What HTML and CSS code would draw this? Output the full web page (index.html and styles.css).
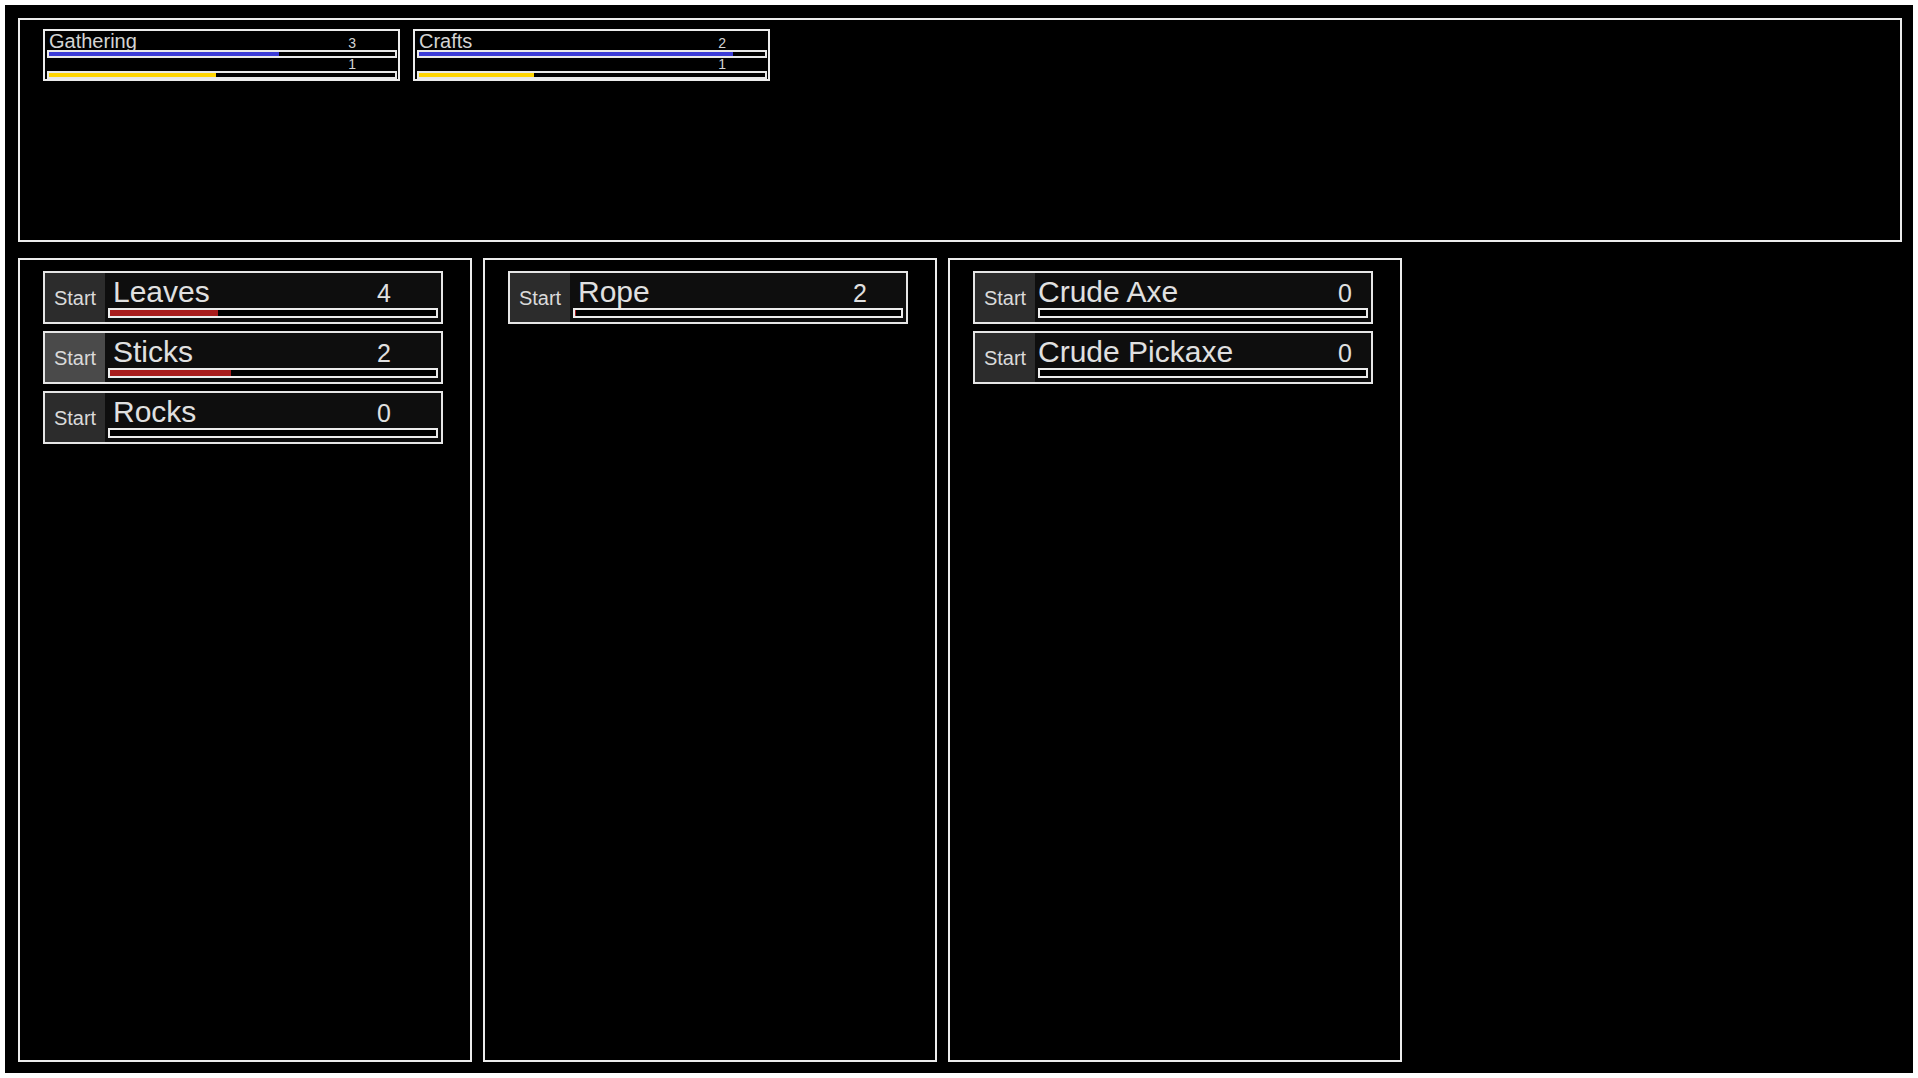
FILE: index.html
```html
<!DOCTYPE html>
<html lang="en">
<head>
<meta charset="utf-8">
<title>Idle Crafting</title>
<link rel="stylesheet" href="styles.css">
</head>
<body>
<div class="app">
  <section class="skills">
    <div class="skill">
      <div class="skill-row"><span class="skill-name">Gathering</span><span class="skill-num">3</span></div>
      <div class="meter"><div class="meter-fill meter-fill--xp" style="width:66.5%"></div></div>
      <div class="skill-row skill-row--sub"><span class="skill-num">1</span></div>
      <div class="meter"><div class="meter-fill meter-fill--lvl" style="width:48.3%"></div></div>
    </div>
    <div class="skill">
      <div class="skill-row"><span class="skill-name">Crafts</span><span class="skill-num">2</span></div>
      <div class="meter"><div class="meter-fill meter-fill--xp" style="width:90.8%"></div></div>
      <div class="skill-row skill-row--sub"><span class="skill-num">1</span></div>
      <div class="meter"><div class="meter-fill meter-fill--lvl" style="width:33.2%"></div></div>
    </div>
  </section>

  <main class="columns">
    <section class="column column--gather">
      <div class="task">
        <button class="start">Start</button>
        <div class="task-body">
          <div class="task-head"><span class="task-name">Leaves</span><span class="task-count">4</span></div>
          <div class="bar"><div class="bar-fill" style="width:33%"></div></div>
        </div>
      </div>
      <div class="task">
        <button class="start start--hover">Start</button>
        <div class="task-body">
          <div class="task-head"><span class="task-name">Sticks</span><span class="task-count">2</span></div>
          <div class="bar"><div class="bar-fill" style="width:37%"></div></div>
        </div>
      </div>
      <div class="task">
        <button class="start">Start</button>
        <div class="task-body">
          <div class="task-head"><span class="task-name">Rocks</span><span class="task-count">0</span></div>
          <div class="bar"><div class="bar-fill" style="width:0%"></div></div>
        </div>
      </div>
    </section>

    <section class="column column--refine">
      <div class="task">
        <button class="start">Start</button>
        <div class="task-body">
          <div class="task-head"><span class="task-name">Rope</span><span class="task-count">2</span></div>
          <div class="bar"><div class="bar-fill" style="width:0.4%"></div></div>
        </div>
      </div>
    </section>

    <section class="column column--tools">
      <div class="task">
        <button class="start">Start</button>
        <div class="task-body">
          <div class="task-head"><span class="task-name">Crude Axe</span><span class="task-count">0</span></div>
          <div class="bar"><div class="bar-fill" style="width:0%"></div></div>
        </div>
      </div>
      <div class="task">
        <button class="start">Start</button>
        <div class="task-body">
          <div class="task-head"><span class="task-name">Crude Pickaxe</span><span class="task-count">0</span></div>
          <div class="bar"><div class="bar-fill" style="width:0%"></div></div>
        </div>
      </div>
    </section>
  </main>
</div>
</body>
</html>
```

FILE: styles.css
```css
html {
  background: #ffffff;
}

body {
  margin: 5px;
  height: 1068px;
  background: #000000;
  color: #dadada;
  font-family: "Liberation Sans", Arial, sans-serif;
}

.app {
  box-sizing: border-box;
  height: 100%;
  padding: 13px 11px 11px 13px;
  display: flex;
  flex-direction: column;
  gap: 16px;
}

/* ---------- top skill panel ---------- */
.skills {
  box-sizing: border-box;
  height: 224px;
  border: 2px solid #ececec;
  padding: 9px 23px;
  display: flex;
  align-items: flex-start;
  gap: 13px;
}

.skill {
  box-sizing: border-box;
  width: 357px;
  height: 52px;
  border: 2px solid #ececec;
  display: flex;
  flex-direction: column;
}

.skill-row {
  height: 19px;
  display: flex;
  align-items: baseline;
  justify-content: space-between;
  padding: 0 42px 0 4px;
  line-height: 20px;
}

.skill-row--sub {
  height: 13px;
  line-height: 13px;
  justify-content: flex-end;
  align-items: flex-end;
}

.skill-name {
  font-size: 20px;
  color: #d4d4d4;
}

.skill-num {
  font-size: 14px;
  color: #d4d4d4;
}

.meter {
  box-sizing: border-box;
  height: 8px;
  margin: 0 1px 0 2px;
  border: 2px solid #e8e8e8;
  background: #000;
}

.meter-fill {
  height: 100%;
}

.meter-fill--xp {
  background: #3b3bd6;
}

.meter-fill--lvl {
  background: #ffd500;
}

/* ---------- columns ---------- */
.columns {
  flex: 1;
  display: flex;
  gap: 11px;
}

.column {
  box-sizing: border-box;
  width: 454px;
  border: 2px solid #ececec;
  padding: 11px 23px;
  display: flex;
  flex-direction: column;
  gap: 7px;
}

.column--gather {
  --name-pad: 5px;
  --count-pad: 47px;
}

.column--refine {
  --name-pad: 5px;
  --count-pad: 36px;
}

.column--tools {
  --name-pad: 0px;
  --count-pad: 16px;
}

.task {
  box-sizing: border-box;
  width: 400px;
  height: 53px;
  border: 2px solid #e6e6e6;
  background: #0e0e0e;
  display: flex;
}

.start {
  width: 60px;
  margin: 0;
  padding: 0;
  border: 0;
  background: #2c2c2c;
  color: #dadada;
  font-family: "Liberation Sans", Arial, sans-serif;
  font-size: 20px;
  line-height: 20px;
  cursor: pointer;
}

.start--hover {
  background: #4a4a4a;
}

.task-body {
  flex: 1;
  display: flex;
  flex-direction: column;
  padding: 0 3px;
}

.task-head {
  box-sizing: border-box;
  height: 35px;
  padding: 2px 0 0 var(--name-pad);
  display: flex;
  align-items: baseline;
  line-height: 33px;
}

.task-name {
  font-size: 30px;
  color: #e0e0e0;
}

.task-count {
  margin-left: auto;
  margin-right: var(--count-pad);
  font-size: 25px;
  color: #e0e0e0;
}

.bar {
  box-sizing: border-box;
  height: 10px;
  border: 2px solid #ececec;
  background: #000;
}

.bar-fill {
  height: 100%;
  background: #a81c1c;
}
```
